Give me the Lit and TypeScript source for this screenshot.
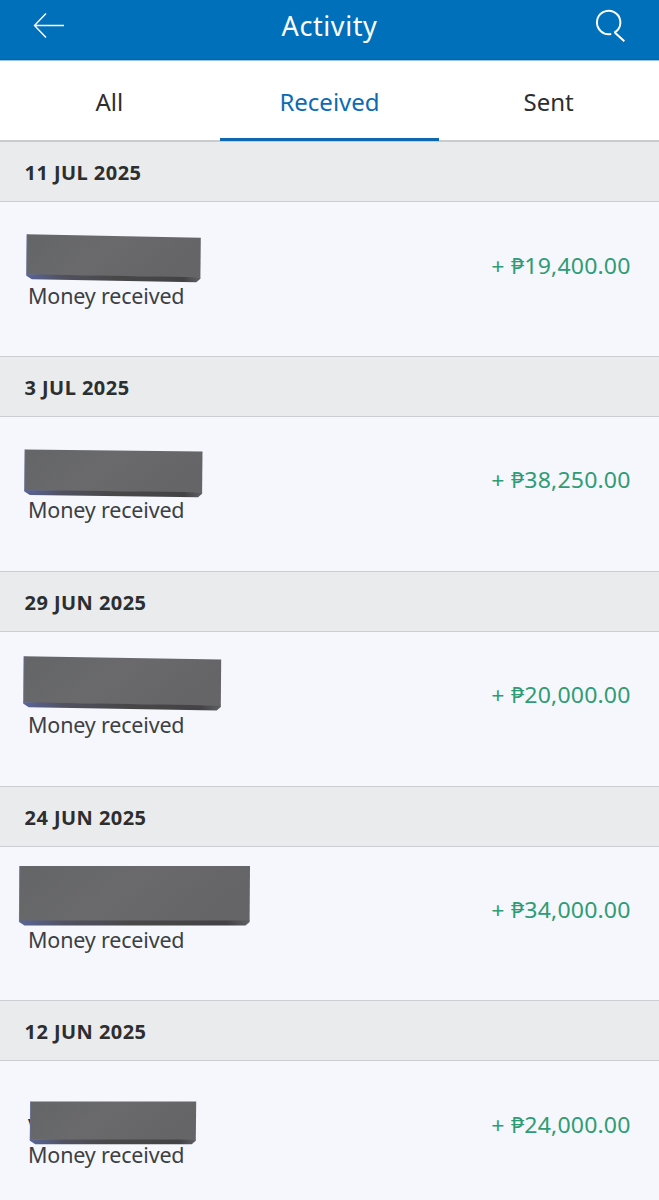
import { LitElement, html, css, svg } from "lit";
import { customElement } from "lit/decorators.js";

interface Entry {
  date: string;
  name: string;
  amount: string;
  // Cover corners relative to the row: left, right, top-left y, top-right y, bottom-left y, bottom-right y
  cover: number[];
}

const ENTRIES: Entry[] = [
  { date: "11 JUL 2025", name: "", amount: "19,400.00", cover: [26.8, 200.8, 32.3, 35.8, 77.3, 80.3] },
  { date: "3 JUL 2025", name: "", amount: "38,250.00", cover: [24.8, 202.5, 32.5, 34.5, 78, 80.2] },
  { date: "29 JUN 2025", name: "", amount: "20,000.00", cover: [23.8, 221.2, 24.3, 27.5, 75.3, 78.5] },
  { date: "24 JUN 2025", name: "", amount: "34,000.00", cover: [19.5, 250, 19, 19, 78.5, 78.5] },
  { date: "12 JUN 2025", name: "V", amount: "24,000.00", cover: [30.3, 196.2, 40.5, 40.5, 83.2, 83.2] },
];

@customElement("app-root")
export class AppRoot extends LitElement {
  static styles = css`
    :host {
      display: block;
      height: 1200px;
      overflow: hidden;
      background: #f5f7fc;
      color: #2c2e2f;
      font-family: "Noto Sans", sans-serif;
    }
    .bar {
      display: grid;
      grid-template-columns: 80px 1fr 80px;
      align-items: center;
      height: 60px;
      box-sizing: border-box;
      border-bottom: 1px solid #0762a7;
      background: #0070ba;
      color: #fff;
    }
    .title {
      text-align: center;
      font-size: 27px;
      line-height: 36px;
      margin-top: -7px;
      letter-spacing: 0.6px;
      font-weight: 400;
    }
    .icon { display: block; width: 80px; height: 59px; }
    .tabs {
      display: grid;
      grid-template-columns: repeat(3, 1fr);
      height: 82.2px;
      box-sizing: border-box;
      background: linear-gradient(#c9cbcd, #c9cbcd) bottom / 100% 2.4px no-repeat #fff;
      border-top: 1px solid #9cc3e0;
    }
    .tab {
      height: 80px;
      box-sizing: border-box;
      border-bottom: 3px solid transparent;
      text-align: center;
      text-indent: -1px;
      font-size: 24px;
      line-height: 82px;
    }
    .on { color: #0c6cb3; border-color: #0f68ae; text-indent: 0; }
    .group { height: 214.8px; }
    .date {
      height: 60px;
      box-sizing: border-box;
      border-bottom: 1.5px solid #cbcdd2;
      background: #eaebed;
      padding-left: 24.5px;
      font-size: 20px;
      font-weight: 700;
      line-height: 62.4px;
      letter-spacing: 0.45px;
    }
    .row {
      position: relative;
      display: flex;
      justify-content: space-between;
      height: 154.8px;
      box-sizing: border-box;
      border-bottom: 1.5px solid #cbcdd2;
      padding: 49.5px 28px 0 28px;
    }
    .name { height: 29px; font-size: 22px; line-height: 30px; }
    .kind { font-size: 21.5px; line-height: 30px; color: #3d3f44; letter-spacing: -0.18px; }
    .amount {
      font-size: 21px;
      line-height: 28px;
      color: #2f9c76;
      letter-spacing: 0.15px;
      transform: scaleX(1.1);
      transform-origin: right;
    }
    .cover { position: absolute; left: 0; top: 0; width: 260px; height: 100px; }
  `;

  private cover(c: number[], i: number) {
    const [l, r, tl, tr, bl, br] = c;
    const face = `M${l} ${tl}L${r} ${tr}L${r - 0.4} ${br - 4.5}L${l - 0.4} ${bl - 4.5}Z`;
    const lip = `M${l - 0.4} ${bl - 5}L${r - 0.4} ${br - 5}V${br - 3.5}L${r - 4.5} ${br}L${l + 5} ${bl}L${l - 0.4} ${bl - 3.5}Z`;
    return html`<svg class="cover" viewBox="0 0 260 100">
      ${svg`<defs>
        <linearGradient id="f${i}" x2="1" y2="0.3">
          <stop offset="0" stop-color="#646567"/><stop offset="0.5" stop-color="#6a6a6c"/><stop offset="1" stop-color="#656567"/>
        </linearGradient>
        <linearGradient id="l${i}">
          <stop offset="0" stop-color="#5a6498"/><stop offset="0.2" stop-color="#505262"/><stop offset="0.5" stop-color="#484849"/><stop offset="0.9" stop-color="#434345"/><stop offset="1" stop-color="#606065"/>
        </linearGradient>
      </defs>
      <path d=${face} fill="url(#f${i})"/>
      <path d=${lip} fill="url(#l${i})"/>
      <path d="M${l + 0.3} ${tl}L${l - 0.1} ${bl - 4}" stroke="#6370a0" stroke-width="0.7"/>`}
    </svg>`;
  }

  render() {
    return html`
      <header class="bar">
        <svg class="icon" viewBox="0 0 80 59" fill="none" stroke="#fff" stroke-width="1.4">
          <path d="M64 25.5H34.5M46 13.5L34.5 25.5L46 37.5" />
        </svg>
        <div class="title">Activity</div>
        <svg class="icon" viewBox="0 0 80 59" fill="none" stroke="#fff" stroke-width="2">
          <path d="M32.2 33.9A11.7 11.7 0 1 1 38 30.7C36.3 31.8 35.4 31.9 36.3 33L45.3 41.3" />
        </svg>
      </header>
      <nav class="tabs">
        <div class="tab">All</div>
        <div class="tab on">Received</div>
        <div class="tab">Sent</div>
      </nav>
      ${ENTRIES.map(
        (e, i) => html`<section class="group">
          <div class="date">${e.date}</div>
          <div class="row">
            <div>
              <div class="name">${e.name}</div>
              <div class="kind">Money received</div>
            </div>
            <div class="amount">+ ₱${e.amount}</div>
            ${this.cover(e.cover, i)}
          </div>
        </section>`
      )}
    `;
  }
}
